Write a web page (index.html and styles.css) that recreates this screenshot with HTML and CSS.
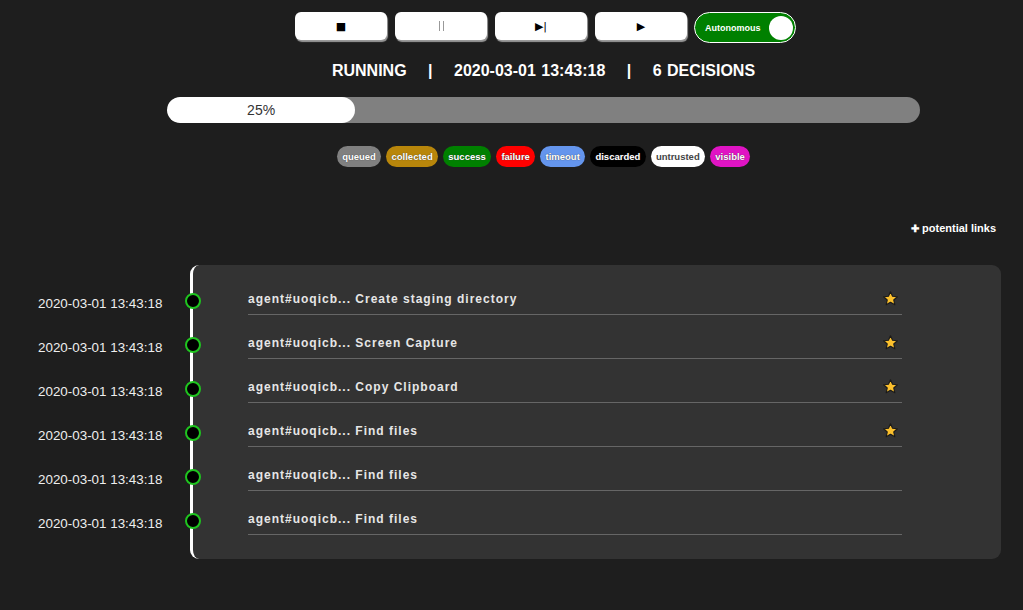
FILE: index.html
```html
<!DOCTYPE html>
<html lang="en">
<head>
    <meta charset="UTF-8">
    <meta name="viewport" content="width=device-width, initial-scale=1.0">
    <title>Operation - Timeline</title>
    <link rel="stylesheet" href="styles.css">
</head>
<body>
    <div class="top-panel">
        <div class="controls">
            <button class="ctl-button">&#9632;</button>
            <button class="ctl-button"><span class="pause-bar"></span><span class="pause-bar"></span></button>
            <button class="ctl-button">&#9654;|</button>
            <button class="ctl-button">&#9654;</button>
            <div class="toggle">
                <span>Autonomous</span>
                <span class="knob"></span>
            </div>
        </div>

        <div class="status">
            RUNNING <span class="sep">|</span> 2020-03-01 13:43:18 <span class="sep">|</span> 6 DECISIONS
        </div>

        <div class="progress">
            <div class="progress-fill" style="width: 25%">25%</div>
        </div>

        <div class="legend">
            <span class="pill queued">queued</span>
            <span class="pill collected">collected</span>
            <span class="pill success">success</span>
            <span class="pill failure">failure</span>
            <span class="pill timeout">timeout</span>
            <span class="pill discarded">discarded</span>
            <span class="pill untrusted">untrusted</span>
            <span class="pill visible">visible</span>
        </div>
    </div>

    <div class="links-bar">
        <span class="plus">&#10010;</span> potential links
    </div>

    <div class="timeline">
        <div class="times">
            <div class="time">2020-03-01 13:43:18</div>
            <div class="time">2020-03-01 13:43:18</div>
            <div class="time">2020-03-01 13:43:18</div>
            <div class="time">2020-03-01 13:43:18</div>
            <div class="time">2020-03-01 13:43:18</div>
            <div class="time">2020-03-01 13:43:18</div>
        </div>

        <div class="events">
            <div class="event">
                <span class="dot"></span>
                <span class="event-name">agent#uoqicb... Create staging directory</span>
                <svg class="star" viewBox="0 0 24 24"><path d="M12 2.5l2.9 6.3 6.8.7-5.1 4.6 1.5 6.8L12 17.4l-6.1 3.5 1.5-6.8-5.1-4.6 6.8-.7z"/></svg>
            </div>
            <div class="event">
                <span class="dot"></span>
                <span class="event-name">agent#uoqicb... Screen Capture</span>
                <svg class="star" viewBox="0 0 24 24"><path d="M12 2.5l2.9 6.3 6.8.7-5.1 4.6 1.5 6.8L12 17.4l-6.1 3.5 1.5-6.8-5.1-4.6 6.8-.7z"/></svg>
            </div>
            <div class="event">
                <span class="dot"></span>
                <span class="event-name">agent#uoqicb... Copy Clipboard</span>
                <svg class="star" viewBox="0 0 24 24"><path d="M12 2.5l2.9 6.3 6.8.7-5.1 4.6 1.5 6.8L12 17.4l-6.1 3.5 1.5-6.8-5.1-4.6 6.8-.7z"/></svg>
            </div>
            <div class="event">
                <span class="dot"></span>
                <span class="event-name">agent#uoqicb... Find files</span>
                <svg class="star" viewBox="0 0 24 24"><path d="M12 2.5l2.9 6.3 6.8.7-5.1 4.6 1.5 6.8L12 17.4l-6.1 3.5 1.5-6.8-5.1-4.6 6.8-.7z"/></svg>
            </div>
            <div class="event">
                <span class="dot"></span>
                <span class="event-name">agent#uoqicb... Find files</span>
            </div>
            <div class="event">
                <span class="dot"></span>
                <span class="event-name">agent#uoqicb... Find files</span>
            </div>
        </div>
    </div>
</body>
</html>
```

FILE: styles.css
```css
body {
    background: #1e1e1e;
    font-family: "Liberation Sans", Arial, sans-serif;
    margin: 0;
    padding: 12px 22px 0 38px;
    color: #fff;
}

.top-panel {
    width: 753px;
    margin-left: 129px;
    display: flex;
    flex-direction: column;
    align-items: center;
}

.controls {
    display: flex;
    align-items: flex-start;
    gap: 8px;
    padding-left: 4px;
}

.ctl-button {
    width: 92px;
    height: 28px;
    background: #fff;
    color: #000;
    border: none;
    border-radius: 6px;
    box-shadow: 1px 2px 1px #999;
    font-family: "DejaVu Sans", sans-serif;
    font-size: 11px;
    padding: 0;
    cursor: pointer;
    display: flex;
    align-items: center;
    justify-content: center;
    gap: 3px;
}

.pause-bar {
    width: 1px;
    height: 10px;
    background: #999;
}

.toggle {
    width: 102px;
    height: 31px;
    box-sizing: border-box;
    background: #008000;
    border: 1.5px solid #fff;
    border-radius: 16px;
    display: flex;
    align-items: center;
    justify-content: space-between;
    padding: 0 2px 0 10px;
    font-size: 9px;
    font-weight: bold;
    margin-left: -1px;
}

.knob {
    width: 24px;
    height: 24px;
    border-radius: 50%;
    background: #fff;
}

.status {
    margin-top: 18px;
    font-size: 16px;
    font-weight: bold;
    height: 20px;
    line-height: 20px;
    word-spacing: 1px;
}

.sep {
    margin: 0 16px;
}

.progress {
    margin-top: 16px;
    width: 100%;
    height: 26px;
    background: #808080;
    border-radius: 13px;
    overflow: hidden;
}

.progress-fill {
    height: 100%;
    background: #fff;
    border-radius: 13px;
    color: #333;
    font-size: 14px;
    text-align: center;
    line-height: 26px;
}

.legend {
    margin-top: 23px;
    display: flex;
    gap: 5px;
}

.pill {
    height: 21px;
    line-height: 21px;
    padding: 0 5.3px;
    border-radius: 11px;
    font-size: 9.5px;
    font-weight: bold;
    color: #fff;
    text-shadow: 0 0 1px #333;
}

.queued { background: #808080; }
.collected { background: #b8860b; }
.success { background: #008000; }
.failure { background: #ff0000; }
.timeout { background: #6495ed; }
.discarded { background: #000; }
.untrusted { background: #fff; color: #444; text-shadow: none; }
.visible { background: #e014c4; }

.links-bar {
    margin-top: 55px;
    text-align: right;
    font-size: 11px;
    font-weight: bold;
    padding-right: 5px;
}

.plus {
    font-size: 10px;
}

.timeline {
    margin-top: 31px;
    display: flex;
}

.times {
    width: 152px;
    padding-top: 17px;
}

.time {
    height: 44px;
    line-height: 44px;
    font-size: 13.4px;
    color: #eee;
}

.events {
    flex: 1;
    background: #333;
    border-left: 3px solid #fff;
    border-radius: 9px;
    padding: 14px 0 24px 55px;
    display: flex;
    flex-direction: column;
    gap: 8px;
}

.event {
    position: relative;
    width: 654px;
    height: 36px;
    box-sizing: border-box;
    border-bottom: 1.5px solid #666;
    display: flex;
    justify-content: space-between;
    align-items: flex-start;
    padding: 13px 3px 0 0;
    font-size: 12px;
    line-height: 14px;
}

.event-name {
    font-weight: bold;
    letter-spacing: 1px;
    color: #e6e6e6;
}

.star {
    width: 17px;
    height: 17px;
    margin-top: -2px;
    fill: #fbc02d;
    stroke: #1a1a1a;
    stroke-width: 1.6;
    stroke-linejoin: round;
}

.dot {
    position: absolute;
    left: -63px;
    top: 14px;
    width: 12px;
    height: 12px;
    border-radius: 50%;
    background: #000;
    border: 2.5px solid #1fc41f;
}
```
